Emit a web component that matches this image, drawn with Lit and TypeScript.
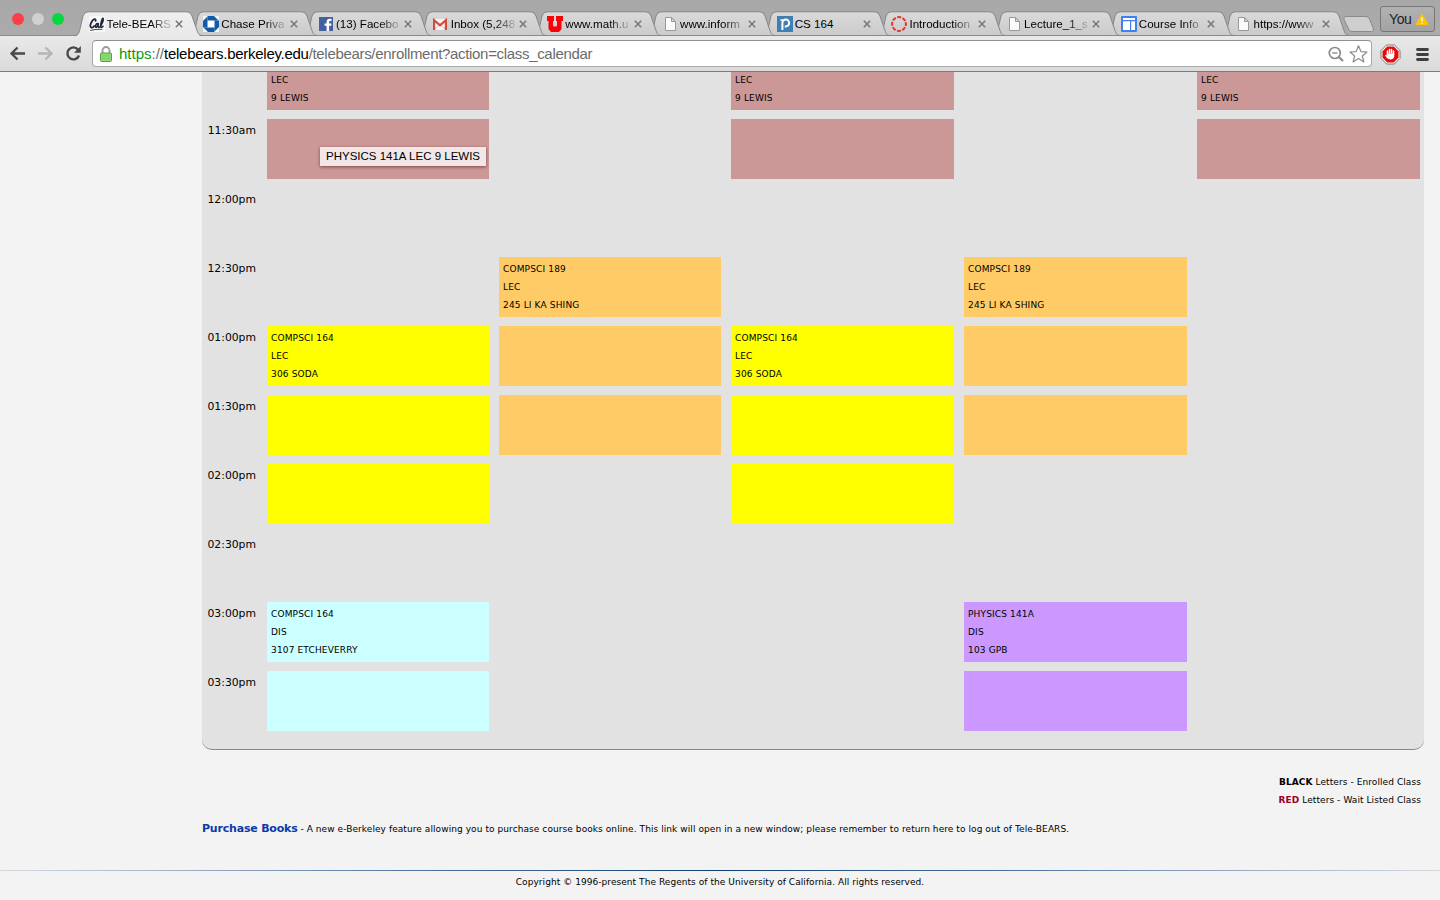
import { LitElement, html, css } from "lit";
import { customElement } from "lit/decorators.js";
import { classMap } from "lit/directives/class-map.js";

type Tab = { icon: string; title: string };

const TABS: Tab[] = [
  { icon: "cal", title: "Tele-BEARS" },
  { icon: "chase", title: "Chase Priva" },
  { icon: "facebook", title: "(13) Facebo" },
  { icon: "gmail", title: "Inbox (5,248" },
  { icon: "utah", title: "www.math.u" },
  { icon: "page", title: "www.inform" },
  { icon: "piazza", title: "CS 164" },
  { icon: "canvas", title: "Introduction" },
  { icon: "page", title: "Lecture_1_s" },
  { icon: "sites", title: "Course Info" },
  { icon: "page", title: "https://www" },
];

const icon = (name: string) => {
  switch (name) {
    case "cal":
      return html`<svg class="fav" viewBox="0 0 16 16"><rect width="16" height="16" fill="#f7f7f4"/>
        <g fill="none" stroke="#1c2340" stroke-linecap="round" stroke-linejoin="round">
        <path stroke-width="1.800" d="M6.600 4.800C7 2.400 4.600 2.800 3 5.200C1 8.200 .8 11.200 2.200 11.600C3.400 11.800 4.600 11 5.200 10"/>
        <path stroke-width="1.500" d="M9.200 7.600C7.600 6.800 6 9.600 6.600 11C7.400 12 8.800 10 9.400 7.800C8.800 10 9 11.600 10 11.400C12 10.600 14.800 4.400 14.200 2.400C13 1.400 11.200 9 11.800 10.800C12.200 11.600 13.200 11.200 14 10.200"/>
        <path stroke-width="1.100" stroke="#4c4a52" d="M1.600 14.400C5 13.200 9 13.200 13 13.200"/></g></svg>`;
    case "chase":
      return html`<svg class="fav" viewBox="0 0 16 16"><rect width="16" height="16" fill="#f4f4f2"/>
        <path fill="#0f5ba7" d="M5 0H11L16 5V11L11 16H5L0 11V5z"/><rect x="4.500" y="4.500" width="7" height="7" fill="#fff"/>
        <path stroke="#6f9fd0" stroke-width=".6" d="M4.500 .3v4.200M15.700 4.500h-4.200M11.500 15.700v-4.200M.3 11.500h4.200"/></svg>`;
    case "facebook":
      return html`<svg class="fav" viewBox="0 0 16 16"><rect x="1" y="1" width="14" height="14" fill="#4460a0"/>
        <path fill="#fff" d="M8.600 15V9.700H6.600V7.400h2V5.800c0-2 1.200-3 3-3h1.900V5h-1.200c-.9 0-1.200.4-1.200 1.200v1.200h2.400l-.3 2.300h-2.100V15z"/></svg>`;
    case "gmail":
      return html`<svg class="fav" viewBox="0 0 16 16"><rect x="0" y="3" width="14" height="11" fill="#f5f5f5"/>
        <path fill="none" stroke="#ccc" d="M2 13.500L5.500 9M12 13.500L8.500 9"/>
        <path fill="none" stroke="#d54b3d" stroke-width="2.200" d="M1.100 14V4.200L7 9.400L12.900 4.200V14"/></svg>`;
    case "utah":
      return html`<svg class="fav" viewBox="0 0 16 16"><path fill="#fb0007" d="M0 0H7V5H6V9.500Q6 10.500 7 10.500H9Q10 10.500 10 9.500V5H9V0H16V5H14.500V13L12 16H4L1.500 13V5H0z"/></svg>`;
    case "piazza":
      return html`<svg class="fav" viewBox="0 0 16 16"><rect width="16" height="16" fill="#3f7fb2"/>
        <path fill="none" stroke="#fff" stroke-width="2" d="M5.400 14V7A3.400 3.400 0 1 1 8.800 10.400H7.800"/><path fill="#fff" d="M3.500 3.200H6.500L5.600 5H3.500z"/></svg>`;
    case "canvas":
      return html`<svg class="fav" viewBox="0 0 16 16"><circle cx="8" cy="8" r="6.900" fill="none" stroke="#e2372c" stroke-width="2" stroke-dasharray="4 1.420" stroke-dashoffset="2"/></svg>`;
    case "sites":
      return html`<svg class="fav" viewBox="0 0 16 16"><rect width="16" height="16" rx="1" fill="#3f7ff0"/>
        <path fill="#fff" d="M2 2h12v2H2zM2 5.200h7V14H2zM10.200 5.200H14V14h-3.800z"/></svg>`;
    default:
      return html`<svg class="fav" viewBox="0 0 16 16"><path fill="#fafafa" stroke="#999" d="M3.500 1.500h6l4 4v9h-10zM9.500 1.500v4h4"/></svg>`;
  }
};

type Block = { kind: string; lines: string[] } | null;
const b = (kind: string, ...lines: string[]): Block => ({ kind, lines });

const ROWS: { time: string; cells: Block[] }[] = [
  { time: "", cells: [b("rose", "LEC", "9 LEWIS"), null, b("rose", "LEC", "9 LEWIS"), null, b("rose", "LEC", "9 LEWIS")] },
  { time: "11:30am", cells: [b("rose"), null, b("rose"), null, b("rose")] },
  { time: "12:00pm", cells: [null, null, null, null, null] },
  { time: "12:30pm", cells: [null, b("orange", "COMPSCI 189", "LEC", "245 LI KA SHING"), null, b("orange", "COMPSCI 189", "LEC", "245 LI KA SHING"), null] },
  { time: "01:00pm", cells: [b("yellow", "COMPSCI 164", "LEC", "306 SODA"), b("orange"), b("yellow", "COMPSCI 164", "LEC", "306 SODA"), b("orange"), null] },
  { time: "01:30pm", cells: [b("yellow"), b("orange"), b("yellow"), b("orange"), null] },
  { time: "02:00pm", cells: [b("yellow"), null, b("yellow"), null, null] },
  { time: "02:30pm", cells: [null, null, null, null, null] },
  { time: "03:00pm", cells: [b("cyan", "COMPSCI 164", "DIS", "3107 ETCHEVERRY"), null, null, b("violet", "PHYSICS 141A", "DIS", "103 GPB"), null] },
  { time: "03:30pm", cells: [b("cyan"), null, null, b("violet"), null] },
];

@customElement("browser-chrome")
export class BrowserChrome extends LitElement {
  static styles = css`
    :host { display: block; height: 72px; flex: none; font-family: "Liberation Sans", Arial, sans-serif; }
    .strip { height: 36px; display: flex; background: linear-gradient(#a8a8a8, #ababab); box-sizing: border-box; border-bottom: 1px solid #8b8b8b; position: relative; }
    .lights { width: 75px; display: flex; gap: 8px; padding: 13px 0 0 12px; box-sizing: border-box; flex: none; }
    .light { width: 12px; height: 12px; border-radius: 50%; background: #fc3e46; }
    .light.dim { background: #d0d0d0; }
    .light.go { background: #06d73e; }
    .tabs { display: flex; padding-top: 11px; }
    .tab { width: 114.7px; height: 25px; position: relative; flex: none; display: flex; align-items: center; box-sizing: border-box; padding-left: 13.6px; }
    .shape { position: absolute; left: 0; top: 0; width: 127px; height: 26px; overflow: visible; }
    .fav { width: 16px; height: 16px; flex: none; position: relative; }
    .title { position: relative; width: 64px; margin-left: 2px; font-size: 11.6px; line-height: 16px; white-space: nowrap; color: #000;
      -webkit-mask-image: linear-gradient(90deg, #000 68%, rgba(0, 0, 0, .15) 100%); mask-image: linear-gradient(90deg, #000 68%, rgba(0, 0, 0, .15) 100%); }
    .title.whole { -webkit-mask-image: none; mask-image: none; }
    .x { position: relative; width: 8px; height: 8px; margin-left: 4.4px; }
    .new { width: 32px; height: 17px; margin: 16px 0 0 6px; overflow: visible; flex: none; }
    .you { position: absolute; right: 5px; top: 6px; width: 55px; height: 26px; box-sizing: border-box; border: 1px solid #777; border-radius: 3px; background: linear-gradient(#b2b2b2, #a3a3a3); display: flex; align-items: center; padding-left: 8px; gap: 4px; font-size: 14px; letter-spacing: -.4px; color: #222; }
    .bar { height: 36px; box-sizing: border-box; border-bottom: 1px solid #7c7c7c; background: linear-gradient(#e9e9e9, #dadada); display: flex; align-items: center; }
    .nav { width: 92px; height: 35px; flex: none; }
    .omni { width: 1280px; height: 27px; box-sizing: border-box; border: 1px solid #a9a9a9; border-top-color: #8f8f8f; border-radius: 4px; background: #fff; display: flex; align-items: center; padding: 0 4px 0 6px; }
    .lock { width: 14px; height: 18px; }
    .url { flex: 1; margin-left: 6px; font-size: 15px; line-height: 20px; letter-spacing: -.32px; color: #6b6b6b; white-space: nowrap; }
    .scheme { color: #0a9a0a; letter-spacing: 0; }
    .slashes { letter-spacing: 0; }
    .host { color: #000; letter-spacing: -.275px; }
    .tools { width: 40px; height: 20px; overflow: visible; }
    .ext { width: 60px; height: 30px; margin-left: 6px; }
  `;

  render() {
    return html`
      <div class="strip">
        <div class="lights"><i class="light"></i><i class="light dim"></i><i class="light go"></i></div>
        <div class="tabs">
          ${TABS.map((t, i) => html`
            <div class="tab" style="z-index:${TABS.length - i}">
              <svg class="shape" viewBox="0 0 127 26">
                <defs>
                  <linearGradient id=${`fill-${i}`} x1="0" y1="0" x2="0" y2="1">
                    <stop offset="0" stop-color=${i ? "#dadada" : "#efefef"} /><stop offset="1" stop-color=${i ? "#cbcbcb" : "#e9e9e9"} />
                  </linearGradient>
                </defs>
                <path fill=${`url(#fill-${i})`} d="M0 ${i ? 24 : 26}C4 24 4 21 5 18L8 5Q9.500 .8 13 .8H112Q115.500 .8 117 5L121.500 18C123 22 123 24 127 ${i ? 24 : 26}Z"/>
                <path fill="none" stroke="#858585" d="M0 24.500C4 24 4 21 5 18L8 5Q9.500 .8 13 .8H112Q115.500 .8 117 5L121.500 18C123 22 123 24 127 24.500"/>
              </svg>
              ${icon(t.icon)}
              <span class=${classMap({ title: true, whole: t.title === "CS 164" })}>${t.title}</span>
              <svg class="x" viewBox="0 0 8 8"><path stroke="#777" stroke-width="1.500" d="M.8 .8L7.200 7.200M7.200 .8L.8 7.200"/></svg>
            </div>`)}
        </div>
        <svg class="new" viewBox="0 0 32 17"><path fill="#cfcfcf" stroke="#8a8a8a" d="M3 .5H23Q25.500 .5 26.500 3L30.500 13Q31 15.500 28.500 15.500H9Q6.500 15.500 5.500 13L.8 3Q.3 .5 3 .5Z"/></svg>
        <div class="you">You
          <svg width="14" height="13" viewBox="0 0 14 13"><path fill="#ffc400" d="M7 .5L13.800 12H.2z"/><path stroke="#fff" stroke-width="1.300" d="M7 4.500V8.500M7 9.700V11"/></svg>
        </div>
      </div>
      <div class="bar">
        <svg class="nav" viewBox="0 0 92 35">
          <path fill="none" stroke="#484848" stroke-width="2.300" d="M25 17.500H11.500M17.500 11.500L11.500 17.500L17.500 23.500"/>
          <path fill="none" stroke="#b5b5b5" stroke-width="2.300" d="M38 17.500H51.500M45.500 11.500L51.500 17.500L45.500 23.500"/>
          <path fill="none" stroke="#484848" stroke-width="2.400" d="M78 13.500A6 6 0 1 0 79 19.500"/>
          <path fill="#484848" d="M80.800 10V16.800H74z"/>
        </svg>
        <div class="omni">
          <svg class="lock" viewBox="0 0 14 18"><path fill="none" stroke="#9a9a9a" stroke-width="1.800" d="M3.500 9V5.500a3.500 3.500 0 0 1 7 0V9"/><rect x="1.500" y="8" width="11" height="8.500" rx="1" fill="#8ddb75" stroke="#54a344"/><path stroke="#7ccb68" d="M3 11h8M3 13.500h8"/></svg>
          <span class="url"><span class="scheme">https</span><span class="slashes">://</span><span class="host">telebears.berkeley.edu</span>/telebears/enrollment?action=class_calendar</span>
          <svg class="tools" viewBox="0 0 40 20">
            <g fill="none" stroke="#8c8c8c"><circle cx="7.800" cy="9" r="5.500" stroke-width="1.700"/><path stroke-width="2.400" d="M11.800 13L16 17"/><path stroke-width="1.400" d="M5.200 9h5.200"/>
            <path stroke-width="1.200" stroke-linejoin="round" d="M31.500 1.800L33.900 7.600L40 8L35.300 12L36.900 18L31.500 14.600L26.100 18L27.700 12L23 8L29.100 7.600Z"/></g>
          </svg>
        </div>
        <svg class="ext" viewBox="0 0 60 30">
          <path fill="#fff" stroke="#666" stroke-width=".9" d="M8.600 6H16.400L22 11.600V19.400L16.400 25H8.600L3 19.400V11.600Z"/>
          <path fill="#e60b0b" d="M9.200 7.500H15.800L20.500 12.200V18.800L15.800 23.500H9.200L4.500 18.800V12.200Z"/>
          <path fill="none" stroke="#fff" stroke-width="1.500" stroke-linecap="round" d="M9.500 16V12M11.500 14V10.500M13.500 14V10.500M15.500 16V12M8 16.500L10 19"/>
          <path fill="#fff" d="M8.800 14.500H16.200V17.500Q15.500 20.500 12.500 20.500Q10.500 20.500 8.800 17.500Z"/>
          <path stroke="#3f3f3f" stroke-width="2.800" stroke-linecap="round" d="M39.500 10.500H49.500M39.500 15.500H49.500M39.500 20.500H49.500"/>
        </svg>
      </div>`;
  }
}

@customElement("app-root")
export class AppRoot extends LitElement {
  static styles = css`
    :host { display: flex; flex-direction: column; width: 1440px; height: 900px; overflow: hidden; background: #f3f3f3; color: #000; font-family: Verdana, "DejaVu Sans", sans-serif; font-size: 9px; line-height: 18px; }
    .panel { margin-left: 202px; width: 1222px; height: 678px; box-sizing: border-box; background: #e2e2e2; border-bottom: 1px solid #888; border-radius: 0 0 10px 10px; padding-right: 4px; display: flex; flex-direction: column; gap: 9px; flex: none; }
    .row { height: 60px; display: grid; grid-template-columns: 55px 222px 222px 223px 223px 223px; column-gap: 10px; flex: none; }
    .row.cut { height: 38px; }
    .time { text-align: right; font-size: 10.8px; padding: 3px 1px 0 0; white-space: nowrap; }
    .cell { padding: 3px 4px 0; position: relative; letter-spacing: .15px; }
    .cut .cell { padding-top: 0; }
    .cut .line:first-child { margin-top: -1px; }
    .line { height: 18px; white-space: nowrap; }
    .rose { background: #cb9897; }
    .orange { background: #ffcb66; }
    .yellow { background: #ffff00; }
    .cyan { background: #ccffff; }
    .violet { background: #cb98ff; }
    .tip { position: absolute; left: 53px; top: 28px; width: 166px; height: 19px; box-sizing: border-box; padding-left: 6px; background: #f2e6e6; box-shadow: 0 1px 3px rgba(60, 20, 20, .6); font: 11.5px/18px "Liberation Sans", Arial, sans-serif; letter-spacing: 0; white-space: nowrap; }
    .legend { margin: 23px 19px 0 0; text-align: right; letter-spacing: .08px; }
    .red { color: #98002e; }
    .books { margin: 11px 0 0 202px; white-space: nowrap; }
    .link { color: #0b3aa8; font-weight: bold; font-size: 11px; letter-spacing: -.2px; }
    .note { letter-spacing: .075px; }
    .rule { height: 1px; margin-top: 32px; background: linear-gradient(90deg, #d5dae0, #9fb2c8 12%, #4a719c 30%, #123f70 50%, #4a719c 70%, #9fb2c8 88%, #d5dae0); flex: none; }
    .copy { text-align: center; margin-top: 2px; letter-spacing: .055px; }
  `;

  render() {
    return html`
      <browser-chrome></browser-chrome>
      <div class="panel">
        ${ROWS.map((r, i) => html`
          <div class=${classMap({ row: true, cut: i === 0 })}>
            <div class="time">${r.time}</div>
            ${r.cells.map((c, j) => html`<div class=${classMap({ cell: true, [c?.kind ?? "free"]: true })}>
              ${c?.lines.map((l) => html`<div class="line">${l}</div>`)}
              ${i === 1 && j === 0 ? html`<div class="tip">PHYSICS 141A LEC 9 LEWIS</div>` : ""}
            </div>`)}
          </div>`)}
      </div>
      <div class="legend">
        <div><b>BLACK</b> Letters - Enrolled Class</div>
        <div><b class="red">RED</b> Letters - Wait Listed Class</div>
      </div>
      <div class="books"><span class="link">Purchase Books</span> <span class="note">- A new e-Berkeley feature allowing you to purchase course books online. This link will open in a new window; please remember to return here to log out of Tele-BEARS.</span></div>
      <div class="rule"></div>
      <div class="copy">Copyright © 1996-present The Regents of the University of California. All rights reserved.</div>`;
  }
}
